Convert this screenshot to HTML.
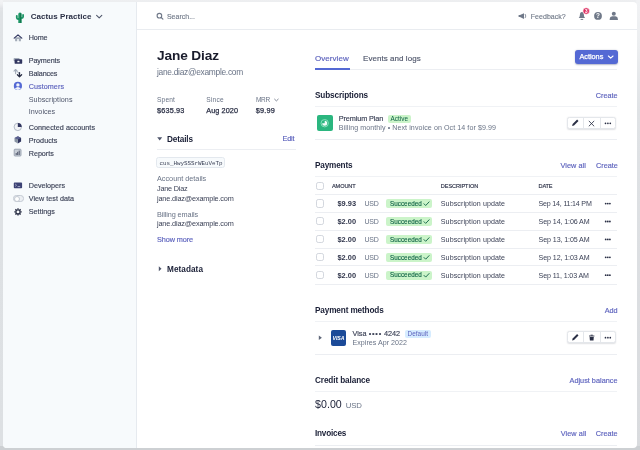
<!DOCTYPE html>
<html><head><meta charset="utf-8">
<style>
*{box-sizing:border-box;margin:0;padding:0}
html,body{width:640px;height:450px;overflow:hidden;font-family:"Liberation Sans",sans-serif;color:#3c4257;font-size:8px}
body{background:linear-gradient(to bottom,#eeeff1 0,#eceef0 2px,#dfe2e5 12px,#dde0e3 100%);position:relative}
#win{position:absolute;left:2.5px;top:1.5px;width:634.7px;height:446px;background:#fff;border-radius:1px 4px 4px 4px}
#side{position:absolute;left:2.5px;top:1.5px;width:134.5px;height:446px;background:#f7fafc;border-right:1px solid #e6eaef;border-radius:1px 0 0 4px}
#txt{position:absolute;left:0;top:0;width:640px;height:450px;will-change:transform;filter:blur(.3px)}
.t{position:absolute;white-space:nowrap;line-height:20px}
.hr{position:absolute;height:1px;background:#eceef2;left:315px;width:302px}
.bx{position:absolute}
svg{position:absolute;left:0;top:0;overflow:visible}
.cb{position:absolute;width:8.2px;height:8.2px;border:1px solid #d3d7de;border-radius:2.2px;background:#fff;left:316.3px}
.btns{position:absolute;left:567px;width:48.5px;height:12px;border:1px solid #e4e7eb;border-radius:2.5px;background:#fff;box-shadow:0 .8px 1.4px rgba(60,66,87,.16)}
.btns i{position:absolute;top:0;width:1px;height:10px;background:#e4e7eb}
</style></head><body>
<div class="bx" style="left:636px;top:0;width:4px;height:450px;background:linear-gradient(to bottom,#f1f2f4 0,#eceef0 45px,#dfe2e5 110px,#d9dbde 100%)"></div>
<div class="bx" style="left:0;top:0;width:3px;height:9px;background:linear-gradient(to bottom,#f2f3f5 0,#f0f1f3 40%,#e0e2e6 100%)"></div>
<div class="bx" style="left:0;top:446px;width:640px;height:4px;background:#cdd0d3"></div>
<div id="win"></div><div id="side"></div>
<div id="txt">
<div class="hr" style="left:137px;width:500px;top:29.3px;background:#e9ecf0"></div>
<div class="hr" style="left:157px;width:139px;top:149px"></div>
<div class="hr" style="top:69px"></div>
<div class="hr" style="top:139.2px"></div>
<div class="hr" style="top:194.2px"></div>
<div class="hr" style="top:211.5px"></div>
<div class="hr" style="top:229.5px"></div>
<div class="hr" style="top:247.5px"></div>
<div class="hr" style="top:265.3px"></div>
<div class="hr" style="top:283.7px"></div>
<div class="hr" style="top:353.8px"></div>
<div class="hr" style="top:444.5px"></div>
<div class="hr" style="top:106.3px;background:#f0f2f5"></div>
<div class="hr" style="top:176.3px;background:#f0f2f5"></div>
<div class="hr" style="top:320.5px;background:#f0f2f5"></div>
<div class="hr" style="top:390.8px;background:#f0f2f5"></div>
<div class="bx" style="left:315px;top:68px;width:34.5px;height:2px;background:#5469d4"></div>
<div class="bx" style="left:575px;top:49.5px;width:43px;height:14.5px;border-radius:3px;background:#5469d4;box-shadow:0 .8px 1.5px rgba(40,50,100,.35)"></div>
<div class="bx" style="left:156.3px;top:157px;width:68.7px;height:10.6px;border:1px solid #e3e8ee;border-radius:2.5px;background:#f7fafc"></div>
<div class="bx" style="left:317px;top:115px;width:15.5px;height:15.6px;border-radius:2px;background:#2bb67f"></div>
<div class="bx" style="left:330.5px;top:330px;width:15.6px;height:15.7px;border-radius:2px;background:#1b4a98"></div>
<div class="bx" style="left:387.5px;top:114.8px;width:23.8px;height:8px;border-radius:2px;background:#cbf4c9"></div>
<div class="bx" style="left:404.5px;top:329.5px;width:26px;height:8px;border-radius:2px;background:#d6ecff"></div>
<div class="bx" style="left:386.3px;top:199.2px;width:46.2px;height:8.8px;border-radius:2px;background:#cbf4c9"></div>
<div class="cb" style="top:199.4px"></div>
<div class="bx" style="left:386.3px;top:217.1px;width:46.2px;height:8.8px;border-radius:2px;background:#cbf4c9"></div>
<div class="cb" style="top:217.3px"></div>
<div class="bx" style="left:386.3px;top:235.0px;width:46.2px;height:8.8px;border-radius:2px;background:#cbf4c9"></div>
<div class="cb" style="top:235.2px"></div>
<div class="bx" style="left:386.3px;top:252.9px;width:46.2px;height:8.8px;border-radius:2px;background:#cbf4c9"></div>
<div class="cb" style="top:253.1px"></div>
<div class="bx" style="left:386.3px;top:270.8px;width:46.2px;height:8.8px;border-radius:2px;background:#cbf4c9"></div>
<div class="cb" style="top:271.0px"></div>
<div class="cb" style="top:182.3px"></div>
<div class="btns" style="top:117px"><i style="left:15.3px"></i><i style="left:31.6px"></i></div>
<div class="btns" style="top:331px"><i style="left:15.3px"></i><i style="left:31.6px"></i></div>
<div class="bx" style="left:13.2px;top:195.2px;width:10.4px;height:6.6px;border-radius:3.3px;background:#eceff3;border:1px solid #c4cad3"></div>
<div class="bx" style="left:13.6px;top:195.5px;width:6px;height:6px;border-radius:3px;background:#fff;border:.8px solid #c4cad3"></div>
<svg width="640" height="450" viewBox="0 0 640 450"><path d="M18.3 22.9V14.1a1.7 1.7 0 0 1 3.4 0V22.9z" fill="#1d9566"/>
<path d="M16.8 15.8v2q0 1.2 1.2 1.2h1" fill="none" stroke="#1d9566" stroke-width="1.8" stroke-linecap="round"/>
<path d="M23.1 14.9v1.9q0 1.2 -1.2 1.2h-1" fill="none" stroke="#1d9566" stroke-width="1.8" stroke-linecap="round"/>
<path d="M20.6 13.4v9.5" stroke="#12704a" stroke-width=".9"/>
<path d="M96.6 15.4l2.6 2.5 2.6-2.5" fill="none" stroke="#4f566b" stroke-width="1.1" stroke-linecap="round" stroke-linejoin="round"/>
<path d="M15.1 37.3h5.8V41.2h-2.1v-2.1h-1.6v2.1h-2.1z" fill="#a3acb9"/>
<path d="M14.2 38.1L18 34.9l3.8 3.2" fill="none" stroke="#30355f" stroke-width="1.2" stroke-linecap="round" stroke-linejoin="round"/>
<rect x="13.6" y="57.9" width="6" height="3.4" rx=".8" fill="#a3acb9"/>
<rect x="14.6" y="59.2" width="7.6" height="4.6" rx=".9" fill="#30355f"/>
<rect x="17.3" y="60.8" width="2.2" height="1.5" rx=".4" fill="#f7fafc"/>
<path d="M15.6 73.6V69.6M14 71.2l1.6-1.7 1.6 1.7" fill="none" stroke="#a3acb9" stroke-width="1.1" stroke-linecap="round" stroke-linejoin="round"/>
<path d="M16.8 71.6q2.6 .2 2.7 3.6" fill="none" stroke="#a3acb9" stroke-width="1"/>
<path d="M19.5 72.6V76.6M17.4 74.8l2.1 2.1 2.1-2.1" fill="none" stroke="#2a2f45" stroke-width="1.3" stroke-linecap="round" stroke-linejoin="round"/>
<circle cx="17.9" cy="85.9" r="4.1" fill="#5469d4"/>
<circle cx="17.9" cy="84.9" r="1.7" fill="#f2f4fb"/>
<path d="M14.9 88.6q3-3 6 0q-3 2.6 -6 0z" fill="#f2f4fb"/>
<circle cx="17.8" cy="126.9" r="3.7" fill="#f1f3f6" stroke="#aab2bf" stroke-width=".9"/>
<path d="M17.8 126.9V123a3.9 3.9 0 0 1 3.9 3.9z" fill="#30355f"/>
<path d="M17.8 136.3l3.3 1.7v3.6l-3.3 1.8z" fill="#30355f"/>
<path d="M17.8 136.3l-3.3 1.7v3.6l3.3 1.8z" fill="#8792a2"/>
<path d="M14.5 138l3.3 1.6 3.3-1.6-3.3-1.7z" fill="#5a6091"/>
<rect x="14.2" y="149.2" width="6.8" height="6.8" rx=".8" fill="#c9cfd8" stroke="#8a94a4" stroke-width=".8"/>
<path d="M16.2 155v-2M17.7 155v-3.2M19.2 155v-4.4" stroke="#4f566b" stroke-width="1"/>
<rect x="13.8" y="182.6" width="8.3" height="5.6" rx=".8" fill="#3c4274"/>
<path d="M15.2 184l1.3 1.2-1.3 1.2M17.6 186.6h2.6" fill="none" stroke="#cfd3ea" stroke-width=".7"/>
<path d="M20.40 211.90L21.70 211.90" stroke="#2a2f45" stroke-width="1.3"/>
<path d="M19.70 213.60L20.62 214.52" stroke="#2a2f45" stroke-width="1.3"/>
<path d="M18.00 214.30L18.00 215.60" stroke="#2a2f45" stroke-width="1.3"/>
<path d="M16.30 213.60L15.38 214.52" stroke="#2a2f45" stroke-width="1.3"/>
<path d="M15.60 211.90L14.30 211.90" stroke="#2a2f45" stroke-width="1.3"/>
<path d="M16.30 210.20L15.38 209.28" stroke="#2a2f45" stroke-width="1.3"/>
<path d="M18.00 209.50L18.00 208.20" stroke="#2a2f45" stroke-width="1.3"/>
<path d="M19.70 210.20L20.62 209.28" stroke="#2a2f45" stroke-width="1.3"/>
<circle cx="18" cy="211.9" r="2.1" fill="none" stroke="#2a2f45" stroke-width="1.3"/>
<circle cx="159.4" cy="15.7" r="2.3" fill="none" stroke="#707989" stroke-width="1.1"/>
<path d="M161.2 17.5l1.7 1.7" stroke="#707989" stroke-width="1.2" stroke-linecap="round"/>
<path d="M518.6 15.1h1.4l4-1.9v5.7l-4-1.9h-1.4z" fill="#707989"/>
<path d="M525 14q1.6 2.05 0 4.1" fill="none" stroke="#707989" stroke-width=".8"/>
<path d="M578.7 18.1q1.2-.9 1.2-3.1 0-2.9 2-2.9t2 2.9q0 2.2 1.2 3.1z" fill="#707989"/>
<path d="M581 19.4h1.8" stroke="#707989" stroke-width="1" stroke-linecap="round"/>
<circle cx="586.2" cy="11" r="3.3" fill="#de3163" stroke="#fff" stroke-width=".6"/>
<text x="586.2" y="12.6" font-size="4.6" font-weight="bold" fill="#fff" text-anchor="middle" font-family="Liberation Sans,sans-serif">3</text>
<circle cx="598" cy="15.9" r="3.9" fill="#707989"/>
<text x="598" y="18.2" font-size="6.4" font-weight="bold" fill="#fff" text-anchor="middle" font-family="Liberation Sans,sans-serif">?</text>
<circle cx="613.8" cy="13.7" r="2" fill="#707989"/>
<path d="M609.7 19.9v-1q0-2.2 2.6-2.6h3q2.6.4 2.6 2.6v1z" fill="#707989"/>
<path d="M157.2 137.3h5l-2.5 3.2z" fill="#4f566b"/>
<path d="M158.8 266.2l2.7 2.55-2.7 2.55z" fill="#4f566b"/>
<path d="M318.8 335.4l3.1 2.3-3.1 2.3z" fill="#5f6779"/>
<path d="M274.6 99.2l1.8 1.7 1.8-1.7" fill="none" stroke="#707989" stroke-width=".9" stroke-linecap="round" stroke-linejoin="round"/>
<path d="M608.4 56l2.3 2.2 2.3-2.2" fill="none" stroke="#fff" stroke-width="1.1" stroke-linecap="round" stroke-linejoin="round"/>
<circle cx="324.7" cy="123.2" r="3.7" fill="none" stroke="#8fe3bf" stroke-width=".9"/>
<path d="M324.7 123.2V120.7A2.5 2.5 0 1 1 322.2 123.2z" fill="#f2fdf8"/>
<text x="332.4" y="340" font-size="6.1" font-weight="bold" font-style="italic" fill="#fff" textLength="12.2" lengthAdjust="spacingAndGlyphs" font-family="Liberation Sans,sans-serif">VISA</text>
<path d="M572.1 126.0l.5-1.9 4.5-4.5 1.4 1.4-4.5 4.5z" fill="#2a2f45"/>
<circle cx="605.5" cy="123.3" r=".85" fill="#2a2f45"/>
<circle cx="607.9" cy="123.3" r=".85" fill="#2a2f45"/>
<circle cx="610.3" cy="123.3" r=".85" fill="#2a2f45"/>
<path d="M572.1 340.4l.5-1.9 4.5-4.5 1.4 1.4-4.5 4.5z" fill="#2a2f45"/>
<circle cx="605.5" cy="337.7" r=".85" fill="#2a2f45"/>
<circle cx="607.9" cy="337.7" r=".85" fill="#2a2f45"/>
<circle cx="610.3" cy="337.7" r=".85" fill="#2a2f45"/>
<path d="M589.1 121.2l4.8 4.8M593.9 121.2l-4.8 4.8" stroke="#2a2f45" stroke-width=".85" stroke-linecap="round"/>
<path d="M589 336h5.4M590.6 335.2h2.2" stroke="#2a2f45" stroke-width=".9"/><path d="M589.6 336.9h4.2l-.3 3.7h-3.6z" fill="#2a2f45"/>
<circle cx="605.7" cy="203.6" r=".9" fill="#2a2f45"/>
<circle cx="607.8" cy="203.6" r=".9" fill="#2a2f45"/>
<circle cx="609.9" cy="203.6" r=".9" fill="#2a2f45"/>
<path d="M424 203.8l1.7 1.7 3.4-3.6" fill="none" stroke="#0e6245" stroke-width=".9" stroke-linecap="round" stroke-linejoin="round"/>
<circle cx="605.7" cy="221.5" r=".9" fill="#2a2f45"/>
<circle cx="607.8" cy="221.5" r=".9" fill="#2a2f45"/>
<circle cx="609.9" cy="221.5" r=".9" fill="#2a2f45"/>
<path d="M424 221.7l1.7 1.7 3.4-3.6" fill="none" stroke="#0e6245" stroke-width=".9" stroke-linecap="round" stroke-linejoin="round"/>
<circle cx="605.7" cy="239.4" r=".9" fill="#2a2f45"/>
<circle cx="607.8" cy="239.4" r=".9" fill="#2a2f45"/>
<circle cx="609.9" cy="239.4" r=".9" fill="#2a2f45"/>
<path d="M424 239.6l1.7 1.7 3.4-3.6" fill="none" stroke="#0e6245" stroke-width=".9" stroke-linecap="round" stroke-linejoin="round"/>
<circle cx="605.7" cy="257.3" r=".9" fill="#2a2f45"/>
<circle cx="607.8" cy="257.3" r=".9" fill="#2a2f45"/>
<circle cx="609.9" cy="257.3" r=".9" fill="#2a2f45"/>
<path d="M424 257.5l1.7 1.7 3.4-3.6" fill="none" stroke="#0e6245" stroke-width=".9" stroke-linecap="round" stroke-linejoin="round"/>
<circle cx="605.7" cy="275.2" r=".9" fill="#2a2f45"/>
<circle cx="607.8" cy="275.2" r=".9" fill="#2a2f45"/>
<circle cx="609.9" cy="275.2" r=".9" fill="#2a2f45"/>
<path d="M424 275.4l1.7 1.7 3.4-3.6" fill="none" stroke="#0e6245" stroke-width=".9" stroke-linecap="round" stroke-linejoin="round"/></svg>
<div class="t" id="t0" style="left:30.75px;top:7.13px;font-size:8.0px;letter-spacing:0.050px;font-weight:bold;color:#2a2f45">Cactus Practice</div>
<div class="t" id="t1" style="left:28.75px;top:28.49px;font-size:7.2px;letter-spacing:-0.125px;color:#3c4257;-webkit-text-stroke:.15px #3c4257">Home</div>
<div class="t" id="t2" style="left:28.75px;top:51.33px;font-size:7.2px;letter-spacing:-0.096px;color:#3c4257;-webkit-text-stroke:.15px #3c4257">Payments</div>
<div class="t" id="t3" style="left:28.75px;top:64.19px;font-size:7.2px;letter-spacing:-0.124px;color:#3c4257;-webkit-text-stroke:.15px #3c4257">Balances</div>
<div class="t" id="t4" style="left:28.75px;top:76.89px;font-size:7.2px;letter-spacing:0.059px;color:#5c62bd;-webkit-text-stroke:.15px #5c62bd">Customers</div>
<div class="t" id="t5" style="left:28.75px;top:89.58px;font-size:7.2px;letter-spacing:0.048px;color:#4f566b">Subscriptions</div>
<div class="t" id="t6" style="left:28.75px;top:101.79px;font-size:7.2px;letter-spacing:0.010px;color:#4f566b">Invoices</div>
<div class="t" id="t7" style="left:28.75px;top:117.58px;font-size:7.2px;letter-spacing:0.041px;color:#3c4257;-webkit-text-stroke:.15px #3c4257">Connected accounts</div>
<div class="t" id="t8" style="left:28.75px;top:130.58px;font-size:7.2px;letter-spacing:0.050px;color:#3c4257;-webkit-text-stroke:.15px #3c4257">Products</div>
<div class="t" id="t9" style="left:28.75px;top:143.58px;font-size:7.2px;letter-spacing:-0.026px;color:#3c4257;-webkit-text-stroke:.15px #3c4257">Reports</div>
<div class="t" id="t10" style="left:28.75px;top:176.19px;font-size:7.2px;letter-spacing:-0.012px;color:#3c4257;-webkit-text-stroke:.15px #3c4257">Developers</div>
<div class="t" id="t11" style="left:28.75px;top:188.99px;font-size:7.2px;letter-spacing:0.016px;color:#3c4257;-webkit-text-stroke:.15px #3c4257">View test data</div>
<div class="t" id="t12" style="left:28.75px;top:201.99px;font-size:7.2px;letter-spacing:0.035px;color:#3c4257;-webkit-text-stroke:.15px #3c4257">Settings</div>
<div class="t" id="t13" style="left:166.90px;top:6.61px;font-size:7.0px;letter-spacing:0.010px;color:#6f7887;-webkit-text-stroke:.12px #6f7887">Search...</div>
<div class="t" id="t14" style="left:530.80px;top:6.51px;font-size:7.0px;letter-spacing:0.042px;color:#6f7887;-webkit-text-stroke:.12px #6f7887">Feedback?</div>
<div class="t" id="t15" style="left:157.00px;top:46.01px;font-size:13.7px;letter-spacing:-0.136px;font-weight:bold;color:#1a1c2c">Jane Diaz</div>
<div class="t" id="t16" style="left:157.00px;top:61.71px;font-size:8.4px;letter-spacing:-0.285px;color:#697386">jane.diaz@example.com</div>
<div class="t" id="t17" style="left:157.00px;top:90.36px;font-size:6.6px;letter-spacing:0.170px;color:#697386">Spent</div>
<div class="t" id="t18" style="left:206.25px;top:90.36px;font-size:6.6px;letter-spacing:0.222px;color:#697386">Since</div>
<div class="t" id="t19" style="left:255.90px;top:90.34px;font-size:6.5px;letter-spacing:-0.205px;color:#697386">MRR</div>
<div class="t" id="t20" style="left:157.00px;top:100.53px;font-size:7.3px;letter-spacing:0.171px;color:#2a2f45;-webkit-text-stroke:.25px #2a2f45">$635.93</div>
<div class="t" id="t21" style="left:206.25px;top:100.53px;font-size:7.3px;letter-spacing:0.067px;color:#2a2f45;-webkit-text-stroke:.25px #2a2f45">Aug 2020</div>
<div class="t" id="t22" style="left:255.75px;top:100.53px;font-size:7.3px;letter-spacing:0.219px;color:#2a2f45;-webkit-text-stroke:.25px #2a2f45">$9.99</div>
<div class="t" id="t23" style="left:167.00px;top:129.70px;font-size:8.2px;letter-spacing:-0.132px;font-weight:bold;color:#1a1f36">Details</div>
<div class="t" id="t24" style="left:282.50px;top:129.37px;font-size:7.3px;letter-spacing:-0.165px;color:#5c62bd;-webkit-text-stroke:.15px #5c62bd">Edit</div>
<div class="t" id="t25" style="left:159.50px;top:153.51px;font-size:5.9px;letter-spacing:-0.037px;font-family:Liberation Mono,monospace;color:#3c4257">cus_HwySSSrWEuVeTp</div>
<div class="t" id="t26" style="left:157.00px;top:169.37px;font-size:7.3px;letter-spacing:-0.017px;color:#697386">Account details</div>
<div class="t" id="t27" style="left:157.00px;top:178.62px;font-size:7.3px;letter-spacing:-0.230px;color:#3c4257">Jane Diaz</div>
<div class="t" id="t28" style="left:157.00px;top:188.62px;font-size:7.3px;letter-spacing:-0.159px;color:#3c4257">jane.diaz@example.com</div>
<div class="t" id="t29" style="left:157.00px;top:204.62px;font-size:7.3px;letter-spacing:-0.118px;color:#697386">Billing emails</div>
<div class="t" id="t30" style="left:157.00px;top:214.23px;font-size:7.3px;letter-spacing:-0.159px;color:#3c4257">jane.diaz@example.com</div>
<div class="t" id="t31" style="left:157.00px;top:230.37px;font-size:7.3px;letter-spacing:-0.107px;color:#5c62bd;-webkit-text-stroke:.15px #5c62bd">Show more</div>
<div class="t" id="t32" style="left:167.00px;top:259.70px;font-size:8.2px;letter-spacing:0.067px;font-weight:bold;color:#1a1f36">Metadata</div>
<div class="t" id="t33" style="left:315.00px;top:48.88px;font-size:8.0px;letter-spacing:0.054px;color:#5c62bd;-webkit-text-stroke:.15px #5c62bd">Overview</div>
<div class="t" id="t34" style="left:363.00px;top:48.88px;font-size:8.0px;letter-spacing:0.056px;color:#4f566b;-webkit-text-stroke:.15px #4f566b">Events and logs</div>
<div class="t" id="t35" style="left:579.40px;top:47.37px;font-size:7.3px;letter-spacing:-0.006px;color:#fff;-webkit-text-stroke:.25px #fff">Actions</div>
<div class="t" id="t36" style="left:315.00px;top:86.35px;font-size:8.2px;letter-spacing:-0.128px;font-weight:bold;color:#1a1f36">Subscriptions</div>
<div class="t" id="t37" style="left:595.80px;top:86.12px;font-size:7.3px;letter-spacing:-0.037px;color:#5c62bd;-webkit-text-stroke:.15px #5c62bd">Create</div>
<div class="t" id="t38" style="left:338.75px;top:109.37px;font-size:7.3px;letter-spacing:-0.115px;color:#3c4257;-webkit-text-stroke:.15px #3c4257">Premium Plan</div>
<div class="t" id="t39" style="left:390.50px;top:109.05px;font-size:6.4px;letter-spacing:0.017px;color:#0e6245">Active</div>
<div class="t" id="t40" style="left:338.75px;top:118.45px;font-size:7.1px;letter-spacing:0.076px;color:#697386">Billing monthly • Next invoice on Oct 14 for $9.99</div>
<div class="t" id="t41" style="left:315.00px;top:156.45px;font-size:8.2px;letter-spacing:-0.158px;font-weight:bold;color:#1a1f36">Payments</div>
<div class="t" id="t42" style="left:560.60px;top:156.03px;font-size:7.3px;letter-spacing:0.025px;color:#5c62bd;-webkit-text-stroke:.15px #5c62bd">View all</div>
<div class="t" id="t43" style="left:596.00px;top:156.03px;font-size:7.3px;letter-spacing:-0.037px;color:#5c62bd;-webkit-text-stroke:.15px #5c62bd">Create</div>
<div class="t" id="t44" style="left:332.00px;top:176.11px;font-size:5.6px;letter-spacing:-0.118px;color:#2a2f45;-webkit-text-stroke:.15px #2a2f45">AMOUNT</div>
<div class="t" id="t45" style="left:440.80px;top:176.11px;font-size:5.6px;letter-spacing:-0.079px;color:#2a2f45;-webkit-text-stroke:.15px #2a2f45">DESCRIPTION</div>
<div class="t" id="t46" style="left:538.60px;top:176.11px;font-size:5.6px;letter-spacing:-0.204px;color:#2a2f45;-webkit-text-stroke:.15px #2a2f45">DATE</div>
<div class="t" id="t47" style="left:337.50px;top:194.46px;font-size:7.4px;letter-spacing:0.000px;font-weight:bold;color:#30354b">$9.93</div>
<div class="t" id="t48" style="left:364.50px;top:194.31px;font-size:7.0px;letter-spacing:-0.212px;color:#697386">USD</div>
<div class="t" id="t49" style="left:390.00px;top:193.87px;font-size:6.3px;letter-spacing:0.028px;color:#0e6245;-webkit-text-stroke:.12px #0e6245">Succeeded</div>
<div class="t" id="t50" style="left:440.80px;top:194.15px;font-size:7.1px;letter-spacing:0.085px;color:#3c4257">Subscription update</div>
<div class="t" id="t51" style="left:538.60px;top:194.15px;font-size:7.1px;letter-spacing:-0.204px;color:#3c4257">Sep 14, 11:14 PM</div>
<div class="t" id="t52" style="left:337.50px;top:212.35px;font-size:7.4px;letter-spacing:0.000px;font-weight:bold;color:#30354b">$2.00</div>
<div class="t" id="t53" style="left:364.50px;top:212.22px;font-size:7.0px;letter-spacing:-0.212px;color:#697386">USD</div>
<div class="t" id="t54" style="left:390.00px;top:211.77px;font-size:6.3px;letter-spacing:0.028px;color:#0e6245;-webkit-text-stroke:.12px #0e6245">Succeeded</div>
<div class="t" id="t55" style="left:440.80px;top:212.05px;font-size:7.1px;letter-spacing:0.085px;color:#3c4257">Subscription update</div>
<div class="t" id="t56" style="left:538.60px;top:212.05px;font-size:7.1px;letter-spacing:-0.100px;color:#3c4257">Sep 14, 1:06 AM</div>
<div class="t" id="t57" style="left:337.50px;top:230.25px;font-size:7.4px;letter-spacing:0.000px;font-weight:bold;color:#30354b">$2.00</div>
<div class="t" id="t58" style="left:364.50px;top:230.11px;font-size:7.0px;letter-spacing:-0.212px;color:#697386">USD</div>
<div class="t" id="t59" style="left:390.00px;top:229.66px;font-size:6.3px;letter-spacing:0.028px;color:#0e6245;-webkit-text-stroke:.12px #0e6245">Succeeded</div>
<div class="t" id="t60" style="left:440.80px;top:229.95px;font-size:7.1px;letter-spacing:0.085px;color:#3c4257">Subscription update</div>
<div class="t" id="t61" style="left:538.60px;top:229.95px;font-size:7.1px;letter-spacing:-0.100px;color:#3c4257">Sep 13, 1:05 AM</div>
<div class="t" id="t62" style="left:337.50px;top:248.16px;font-size:7.4px;letter-spacing:0.000px;font-weight:bold;color:#30354b">$2.00</div>
<div class="t" id="t63" style="left:364.50px;top:248.01px;font-size:7.0px;letter-spacing:-0.212px;color:#697386">USD</div>
<div class="t" id="t64" style="left:390.00px;top:247.57px;font-size:6.3px;letter-spacing:0.028px;color:#0e6245;-webkit-text-stroke:.12px #0e6245">Succeeded</div>
<div class="t" id="t65" style="left:440.80px;top:247.85px;font-size:7.1px;letter-spacing:0.085px;color:#3c4257">Subscription update</div>
<div class="t" id="t66" style="left:538.60px;top:247.85px;font-size:7.1px;letter-spacing:-0.100px;color:#3c4257">Sep 12, 1:03 AM</div>
<div class="t" id="t67" style="left:337.50px;top:266.05px;font-size:7.4px;letter-spacing:0.000px;font-weight:bold;color:#30354b">$2.00</div>
<div class="t" id="t68" style="left:364.50px;top:265.92px;font-size:7.0px;letter-spacing:-0.212px;color:#697386">USD</div>
<div class="t" id="t69" style="left:390.00px;top:265.46px;font-size:6.3px;letter-spacing:0.028px;color:#0e6245;-webkit-text-stroke:.12px #0e6245">Succeeded</div>
<div class="t" id="t70" style="left:440.80px;top:265.76px;font-size:7.1px;letter-spacing:0.085px;color:#3c4257">Subscription update</div>
<div class="t" id="t71" style="left:538.60px;top:265.76px;font-size:7.1px;letter-spacing:-0.106px;color:#3c4257">Sep 11, 1:03 AM</div>
<div class="t" id="t72" style="left:315.00px;top:301.45px;font-size:8.2px;letter-spacing:-0.123px;font-weight:bold;color:#1a1f36">Payment methods</div>
<div class="t" id="t73" style="left:604.80px;top:300.83px;font-size:7.3px;letter-spacing:-0.114px;color:#5c62bd;-webkit-text-stroke:.15px #5c62bd">Add</div>
<div class="t" id="t74" style="left:352.50px;top:323.87px;font-size:7.3px;letter-spacing:-0.028px;color:#3c4257;-webkit-text-stroke:.15px #3c4257">Visa <span style="letter-spacing:.75px;margin-left:.3px">••••</span> 4242</div>
<div class="t" id="t75" style="left:407.50px;top:323.80px;font-size:6.4px;letter-spacing:0.038px;color:#5c62bd">Default</div>
<div class="t" id="t76" style="left:352.50px;top:333.05px;font-size:7.1px;letter-spacing:0.030px;color:#697386">Expires Apr 2022</div>
<div class="t" id="t77" style="left:315.00px;top:370.95px;font-size:8.2px;letter-spacing:-0.105px;font-weight:bold;color:#1a1f36">Credit balance</div>
<div class="t" id="t78" style="left:569.50px;top:370.62px;font-size:7.3px;letter-spacing:0.009px;color:#5c62bd;-webkit-text-stroke:.15px #5c62bd">Adjust balance</div>
<div class="t" id="t79" style="left:315.00px;top:393.56px;font-size:10.6px;letter-spacing:0.052px;color:#1a1f36">$0.00</div>
<div class="t" id="t80" style="left:345.75px;top:395.61px;font-size:7.8px;letter-spacing:-0.188px;color:#697386">USD</div>
<div class="t" id="t81" style="left:315.00px;top:424.20px;font-size:8.2px;letter-spacing:-0.204px;font-weight:bold;color:#1a1f36">Invoices</div>
<div class="t" id="t82" style="left:560.75px;top:423.62px;font-size:7.3px;letter-spacing:0.065px;color:#5c62bd;-webkit-text-stroke:.15px #5c62bd">View all</div>
<div class="t" id="t83" style="left:595.75px;top:423.62px;font-size:7.3px;letter-spacing:-0.028px;color:#5c62bd;-webkit-text-stroke:.15px #5c62bd">Create</div>
</div>
</body></html>
